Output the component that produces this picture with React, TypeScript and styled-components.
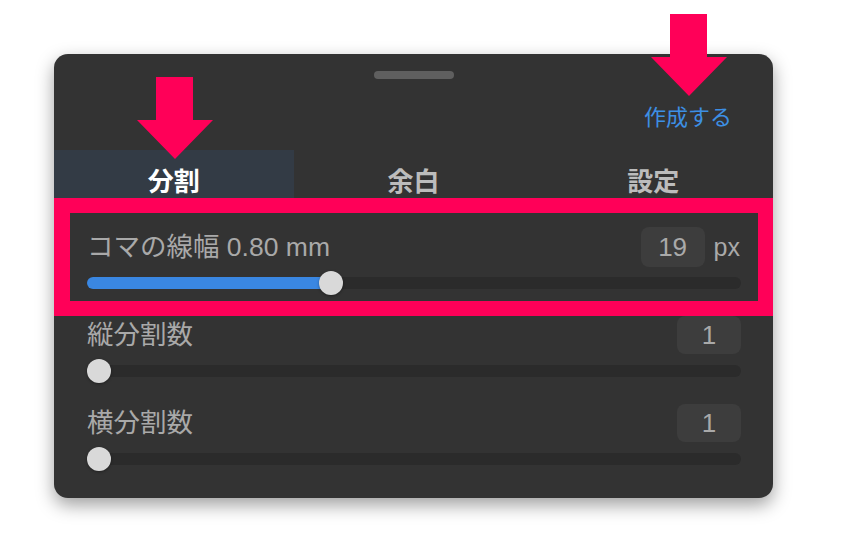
import React from "react";
import styled, { createGlobalStyle } from "styled-components";

const Global = createGlobalStyle`
  html, body { margin: 0; padding: 0; background: #ffffff; }
  body { font-family: "Liberation Sans", "Noto Sans CJK JP", sans-serif; }
  * { box-sizing: border-box; }
`;

const Page = styled.div`
  position: relative;
  width: 847px;
  height: 556px;
  padding: 54px 0 0 54px;
  overflow: hidden;
`;

const Panel = styled.div`
  position: relative;
  width: 719px;
  background: #333333;
  border-radius: 14px;
  box-shadow: 0 7px 18px rgba(0, 0, 0, 0.38);
  padding-top: 17px;
  display: flex;
  flex-direction: column;
`;

const Handle = styled.div`
  width: 80px;
  height: 8px;
  border-radius: 4px;
  background: #5f5f5f;
  align-self: center;
`;

const Header = styled.div`
  height: 71px;
  display: flex;
  justify-content: flex-end;
  align-items: center;
  padding-right: 41px;
`;

const CreateButton = styled.button`
  border: 0;
  background: transparent;
  padding: 0;
  color: #3d8fe4;
  font-family: "Noto Sans CJK JP", sans-serif;
  font-size: 22px;
  line-height: 26px;
  cursor: pointer;
`;

const Tabs = styled.div`
  display: grid;
  grid-template-columns: repeat(3, 1fr);
  height: 48px;
`;

const Tab = styled.div<{ $active?: boolean }>`
  display: flex;
  justify-content: center;
  align-items: flex-end;
  padding-bottom: 3px;
  background: ${(p) => (p.$active ? "#333b45" : "transparent")};
  color: ${(p) => (p.$active ? "#ffffff" : "#bcbcbc")};
  font-family: "Noto Sans CJK JP", sans-serif;
  font-weight: 700;
  font-size: 26px;
  line-height: 30px;
`;

const Rows = styled.div`
  display: flex;
  flex-direction: column;
  gap: 26px;
  padding: 29px 32px 33px 33px;
`;

const Row = styled.div`
  display: flex;
  flex-direction: column;
  gap: 10px;
`;

const RowHead = styled.div`
  height: 40px;
  display: flex;
  align-items: center;
  justify-content: space-between;
`;

const Label = styled.span`
  color: #a9a9a9;
  font-size: 26.5px;
  line-height: 30px;
`;

const ValueGroup = styled.div`
  display: flex;
  align-items: center;
  gap: 9px;
`;

const NumberBox = styled.div<{ $short?: boolean }>`
  width: 64px;
  height: ${(p) => (p.$short ? "38px" : "40px")};
  border-radius: 8px;
  background: #3d3d3d;
  color: #a9a9a9;
  font-size: 26px;
  display: flex;
  align-items: center;
  justify-content: center;
`;

const Unit = styled.span`
  color: #a9a9a9;
  font-size: 25px;
  line-height: 30px;
  margin-right: 1px;
`;

const Track = styled.div`
  position: relative;
  height: 12px;
  border-radius: 6px;
  background: #2b2b2b;
`;

const Fill = styled.div`
  position: absolute;
  left: 0;
  top: 0;
  bottom: 0;
  border-radius: 6px;
  background: #3a87e2;
`;

const Thumb = styled.div`
  position: absolute;
  top: -6px;
  width: 24px;
  height: 24px;
  border-radius: 50%;
  background: #d9d9d9;
  box-shadow: 0 1px 3px rgba(0, 0, 0, 0.35);
`;

const Highlight = styled.div`
  position: absolute;
  left: 0;
  right: 0;
  top: 144px;
  height: 118px;
  border: 15px solid #ff0058;
  border-left-width: 16px;
  pointer-events: none;
`;

const ArrowWrap = styled.div<{ $x: number; $y: number }>`
  position: absolute;
  left: ${(p) => p.$x}px;
  top: ${(p) => p.$y}px;
  width: 76px;
  height: 82px;
  pointer-events: none;
`;

const Arrow = ({ x, y }: { x: number; y: number }) => (
  <ArrowWrap $x={x} $y={y}>
    <svg width="76" height="82" viewBox="0 0 76 82">
      <polygon points="19,0 56,0 56,43 76,43 38,82 0,43 19,43" fill="#ff0058" />
    </svg>
  </ArrowWrap>
);

const TRACK_W = 655;

const Slider = ({ value }: { value: number }) => {
  const pos = value * (TRACK_W - 24);
  return (
    <Track>
      {value > 0 && <Fill style={{ width: pos + 12 }} />}
      <Thumb style={{ left: pos }} />
    </Track>
  );
};

export default function App() {
  return (
    <>
      <Global />
      <Page>
        <Panel>
          <Handle />
          <Header>
            <CreateButton>作成する</CreateButton>
          </Header>
          <Tabs>
            <Tab $active>分割</Tab>
            <Tab>余白</Tab>
            <Tab>設定</Tab>
          </Tabs>
          <Rows>
            <Row>
              <RowHead>
                <Label>コマの線幅 0.80 mm</Label>
                <ValueGroup>
                  <NumberBox>19</NumberBox>
                  <Unit>px</Unit>
                </ValueGroup>
              </RowHead>
              <Slider value={0.368} />
            </Row>
            <Row>
              <RowHead>
                <Label>縦分割数</Label>
                <NumberBox $short>1</NumberBox>
              </RowHead>
              <Slider value={0} />
            </Row>
            <Row>
              <RowHead>
                <Label>横分割数</Label>
                <NumberBox $short>1</NumberBox>
              </RowHead>
              <Slider value={0} />
            </Row>
          </Rows>
          <Highlight />
        </Panel>
        <Arrow x={137} y={77} />
        <Arrow x={651} y={14} />
      </Page>
    </>
  );
}
